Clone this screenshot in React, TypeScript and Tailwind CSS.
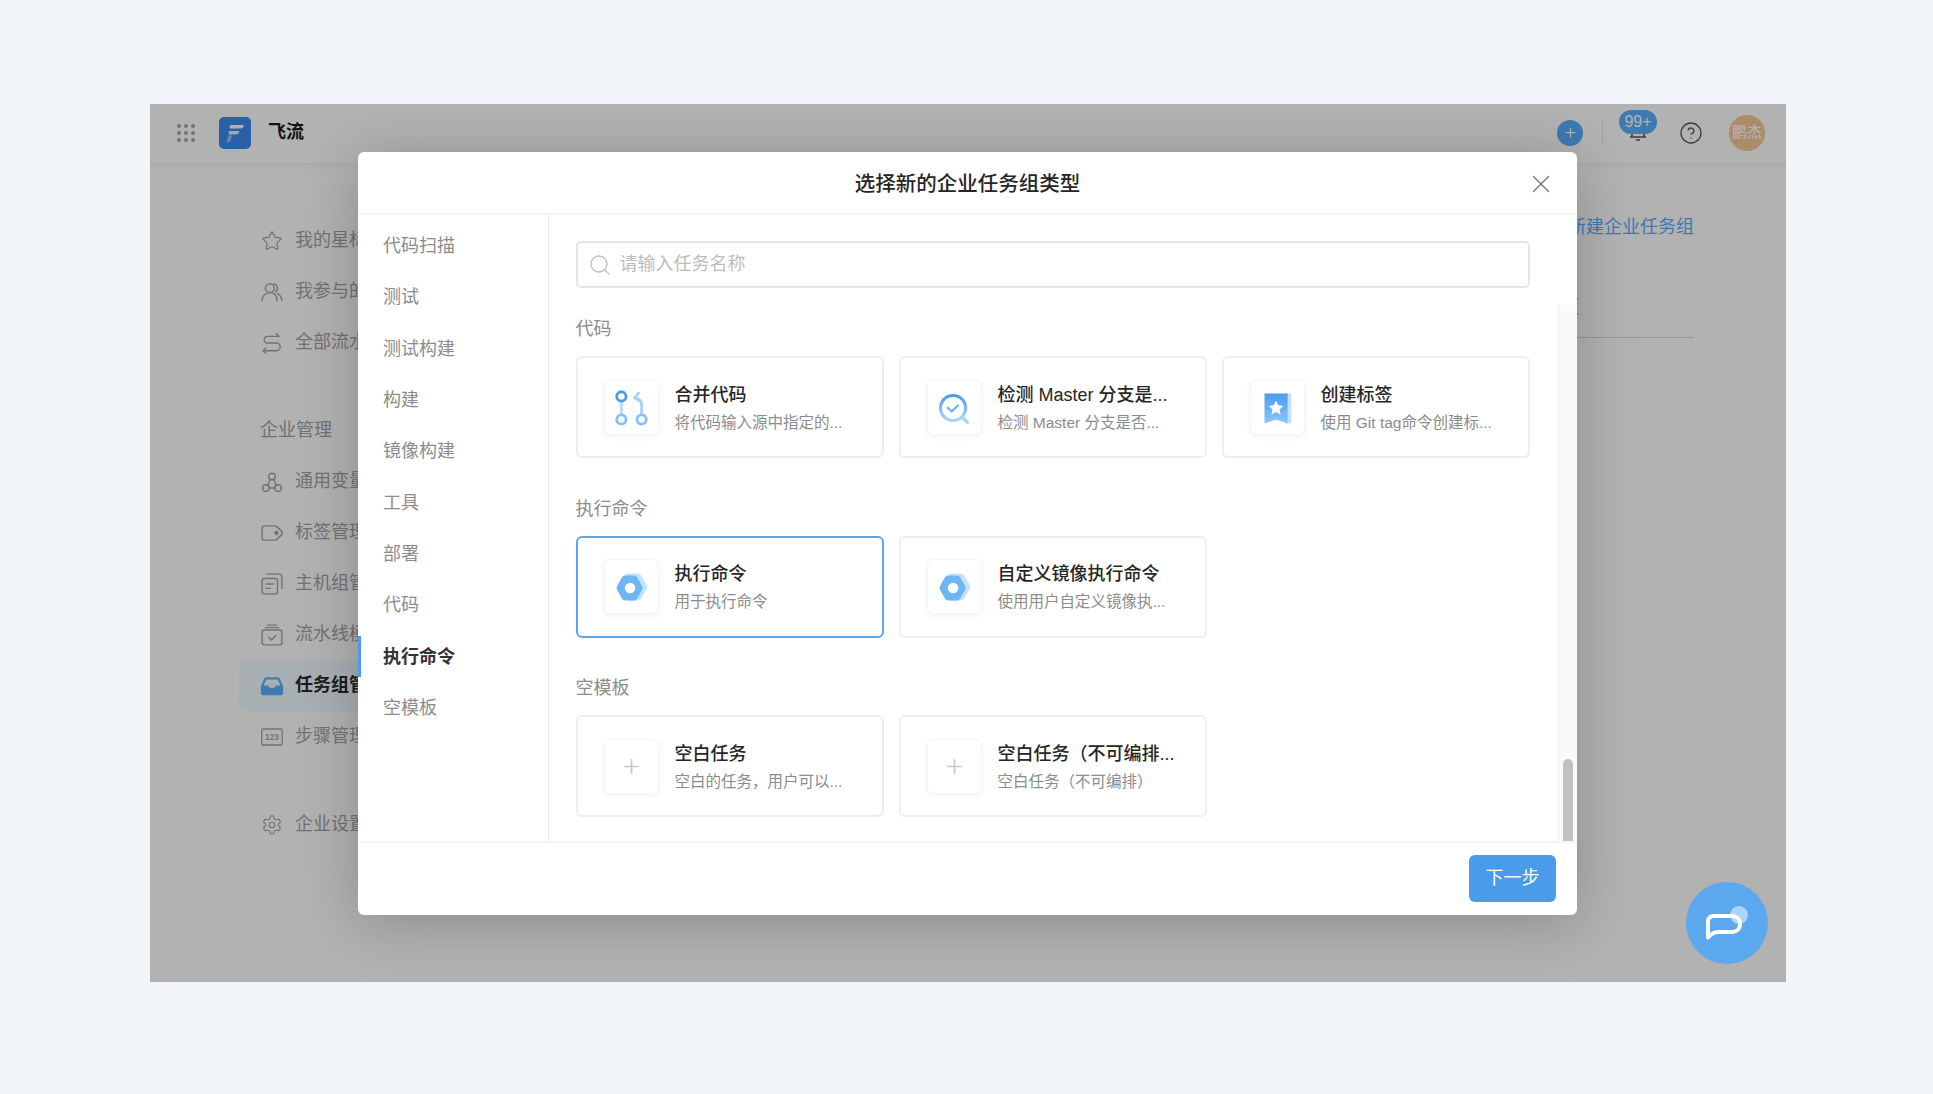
import { HelpCircle, Plus, Search, Settings, Star, X } from "lucide-react";
import type { ReactNode } from "react";

const font = "font-['Liberation_Sans','Noto_Sans_CJK_SC',sans-serif]";

function Line({ children }: { children: ReactNode }) {
  return (
    <svg width="22" height="22" viewBox="0 0 20 20" fill="none" stroke="currentColor" strokeWidth="1.300" strokeLinecap="round" strokeLinejoin="round">
      {children}
    </svg>
  );
}

const sideTop = [
  {
    label: "我的星标",
    icon: <Star size={22} strokeWidth={1.300} />,
  },
  {
    label: "我参与的",
    icon: (
      <Line>
        <circle cx="8" cy="6.500" r="4" />
        <path d="M1 18c0-4 2.500-6.500 5.500-7M9.500 10.800c3 .6 5 3.200 5 7.200M11.500 2.600a4 4 0 0 1 1.500 7.400M15 11.500c2.200 1 3.500 3 4 6" />
      </Line>
    ),
  },
  {
    label: "全部流水线",
    icon: (
      <Line>
        <path d="M14 1.500l2.500 2.500H6a3 3 0 0 0 0 6h8a3.500 3.500 0 0 1 0 7H2" />
        <path d="M4.500 14.500 2 17l2.500 2.500" />
      </Line>
    ),
  },
];

const sideManage = [
  {
    label: "通用变量",
    icon: (
      <Line>
        <circle cx="10" cy="5" r="3" />
        <circle cx="4.500" cy="15.500" r="3" />
        <circle cx="15.500" cy="15.500" r="3" />
        <path d="M8.500 7.700 6 13M11.500 7.700 14 13M7.500 15.500h5" />
      </Line>
    ),
  },
  {
    label: "标签管理",
    icon: (
      <Line>
        <path d="M3 3.500h10.500l5.500 5v3l-5.500 5H3a2 2 0 0 1-2-2v-9a2 2 0 0 1 2-2z" />
        <circle cx="14" cy="10" r="1.300" fill="currentColor" />
      </Line>
    ),
  },
  {
    label: "主机组管理",
    icon: (
      <Line>
        <rect x="1" y="5" width="14" height="14" rx="2" />
        <path d="M5 1h12a2 2 0 0 1 2 2v11M4.500 10h7M4.500 14h4" />
      </Line>
    ),
  },
  {
    label: "流水线模板",
    icon: (
      <Line>
        <rect x="1" y="5.500" width="18" height="13.500" rx="2" />
        <path d="M4 3.300h12M6 1h8M7 12l2.500 2.500L13.500 10.500" />
      </Line>
    ),
  },
  {
    label: "任务组管理",
    active: true,
    icon: (
      <svg width="22" height="22" viewBox="0 0 20 20" fill="#5aaeff">
        <path d="M5 2h10c1 0 1.600.5 2 1.300l3 6.700v6.500a2 2 0 0 1-2 2H2a2 2 0 0 1-2-2V10l3-6.700C3.400 2.500 4 2 5 2zm-.2 2L2.300 9.500h4.200c.5 1.500 1.800 2.500 3.500 2.500s3-1 3.500-2.500h4.200L15.200 4z" />
      </svg>
    ),
  },
  {
    label: "步骤管理",
    icon: (
      <svg width="22" height="22" viewBox="0 0 20 20" fill="none" stroke="currentColor" strokeWidth="1.200">
        <rect x="0.700" y="2.700" width="18.600" height="14.600" rx="1" />
        <text x="10" y="13" textAnchor="middle" fontSize="7.500" fill="currentColor" stroke="none" fontFamily="Liberation Sans" fontWeight="700">123</text>
      </svg>
    ),
  },
];

const navItems = ["代码扫描", "测试", "测试构建", "构建", "镜像构建", "工具", "部署", "代码", "执行命令", "空模板"];

function MergeIcon() {
  return (
    <svg width="53" height="53" viewBox="0 0 55 55" fill="none" strokeWidth="2.600">
      <path d="M17 21v14" stroke="#bcdcfa" strokeWidth="3" />
      <path d="M38 35V24c0-3-2-5-6-6.500" stroke="#a8d2f9" strokeWidth="3" strokeLinecap="round" />
      <path d="M35 12.500l-4.500 5 5.500 3" stroke="#a8d2f9" strokeWidth="3" strokeLinecap="round" strokeLinejoin="round" />
      <circle cx="17" cy="16" r="4.800" stroke="#4a9bea" strokeWidth="3" />
      <circle cx="17" cy="40" r="4.800" stroke="#85c1f7" strokeWidth="3" />
      <circle cx="38" cy="40" r="4.800" stroke="#85c1f7" strokeWidth="3" />
    </svg>
  );
}

function ScanIcon() {
  return (
    <svg width="53" height="53" viewBox="0 0 55 55" fill="none">
      <defs>
        <linearGradient id="scan" x1="0" y1="0" x2="0" y2="1">
          <stop offset="0" stopColor="#4a9bea" />
          <stop offset="1" stopColor="#aad6fb" />
        </linearGradient>
      </defs>
      <circle cx="26" cy="28" r="13" stroke="url(#scan)" strokeWidth="3.200" />
      <path d="M36 38l5 5" stroke="#a6d3fa" strokeWidth="3.200" strokeLinecap="round" />
      <path d="M20.500 28l4 3.500 6.500-6" stroke="#72b7f5" strokeWidth="2.400" strokeLinecap="round" strokeLinejoin="round" />
    </svg>
  );
}

function TagIcon() {
  return (
    <svg width="53" height="53" viewBox="0 0 55 55">
      <defs>
        <linearGradient id="mark" x1="0" y1="0" x2="0" y2="1">
          <stop offset="0" stopColor="#4a9bea" />
          <stop offset="1" stopColor="#8cc8fa" />
        </linearGradient>
      </defs>
      <path d="M36 13h6v31h-6z" fill="#c4e1fb" />
      <path d="M14 13h24v31l-12-4-12 4z" fill="url(#mark)" />
      <path d="M26 20.500l2.300 4.700 5.200.7-3.800 3.600.9 5.200-4.600-2.500-4.600 2.500.9-5.200-3.800-3.600 5.200-.7z" fill="#fff" />
    </svg>
  );
}

function NutIcon() {
  return (
    <svg width="53" height="53" viewBox="0 0 55 55">
      <path d="M24 18h10l6 10-6 10H24z" fill="#c6e2fc" stroke="#c6e2fc" strokeWidth="8" strokeLinejoin="round" />
      <path d="M21 20h9l5 9-5 9h-9l-5-9z" fill="#6cb5f6" stroke="#6cb5f6" strokeWidth="8" strokeLinejoin="round" />
      <circle cx="26" cy="29" r="5.500" fill="#fff" />
    </svg>
  );
}

function PlusIcon() {
  return (
    <svg width="53" height="53" viewBox="0 0 55 55" stroke="#c6c6c6" strokeWidth="1.800">
      <path d="M27.500 20v15M20 27.500h15" />
    </svg>
  );
}

const groups = [
  {
    title: "代码",
    cards: [
      { title: "合并代码", desc: "将代码输入源中指定的...", icon: <MergeIcon /> },
      { title: "检测 Master 分支是...", desc: "检测 Master 分支是否...", icon: <ScanIcon /> },
      { title: "创建标签", desc: "使用 Git tag命令创建标...", icon: <TagIcon /> },
    ],
  },
  {
    title: "执行命令",
    cards: [
      { title: "执行命令", desc: "用于执行命令", icon: <NutIcon />, selected: true },
      { title: "自定义镜像执行命令", desc: "使用用户自定义镜像执...", icon: <NutIcon /> },
    ],
  },
  {
    title: "空模板",
    cards: [
      { title: "空白任务", desc: "空白的任务，用户可以...", icon: <PlusIcon /> },
      { title: "空白任务（不可编排...", desc: "空白任务（不可编排）", icon: <PlusIcon /> },
    ],
  },
];

function SideRow({ label, icon, active }: { label: string; icon: ReactNode; active?: boolean }) {
  return (
    <div className={`flex h-[51px] items-center gap-[12px] rounded-lg pl-[22px] text-[18px] ${active ? "bg-[#f1fbff] font-bold text-[#2a2a2a]" : "text-[#a4a4a4]"}`}>
      <span className="flex h-[22px] w-[22px] items-center justify-center">{icon}</span>
      {label}
    </div>
  );
}

export default function App() {
  return (
    <div className={`${font} h-[1094px] w-[1933px] overflow-hidden bg-[#f2f6fa] pl-[150px] pt-[104px]`}>
      <div className="relative flex h-[878px] w-[1636px] flex-col overflow-hidden bg-white">
        <header className="flex h-[59px] shrink-0 items-center pb-[2px] pl-[27px] pr-[21px] shadow-[0_2px_8px_rgba(0,0,0,0.06)]">
          <div className="grid grid-cols-3 gap-[3px]">
            {Array.from({ length: 9 }).map((_, i) => (
              <span key={i} className="h-[4px] w-[4px] rounded-full bg-[#a8a8a8]" />
            ))}
          </div>
          <svg width="32" height="32" viewBox="0 0 32 32" className="ml-[24px]">
            <rect width="32" height="32" rx="5" fill="#3d8af0" />
            <path d="M11.500 8h13.500c-.6 2.400-1.800 3.500-3.500 3.500H11c-.6 0-.3-3.500.5-3.500z" fill="#fff" />
            <path d="M10 14h10.500c-.6 2.400-1.600 3.500-3.500 3.500H9.500z" fill="#e6eefb" />
            <path d="M9.500 18.500h3.500l-1.500 5.500-4 2z" fill="#9dbdf0" />
          </svg>
          <span className="ml-[17px] text-[18px] font-bold text-[#1c1c1c]">飞流</span>
          <div className="ml-auto flex items-center">
            <span className="flex h-[26px] w-[26px] items-center justify-center rounded-full bg-[#5aaeff] text-white">
              <Plus size={15} />
            </span>
            <span className="ml-[19px] h-[24px] w-px bg-[#e2e2e2]" />
            <span className="relative ml-[22px] flex h-[26px] w-[26px] items-center justify-center text-[#555]">
              <svg width="22" height="22" viewBox="0 0 22 22" fill="none" stroke="currentColor" strokeWidth="1.600">
                <path d="M5 15V9a6 6 0 0 1 12 0v6M3 15h16M9 18h4" />
              </svg>
              <span className="absolute -left-[6px] -top-[10px] flex h-[24px] w-[38px] items-center justify-center rounded-full bg-[#5aaeff] text-[16px] text-white">99+</span>
            </span>
            <span className="ml-[28px] text-[#555]">
              <HelpCircle size={24} strokeWidth={1.300} />
            </span>
            <span className="ml-[26px] flex h-[36px] w-[36px] items-center justify-center rounded-full bg-[#f6c898] text-[15px] font-medium text-white">鹏杰</span>
          </div>
        </header>

        <div className="flex flex-1">
          <aside className="ml-[89px] w-[210px] shrink-0 pt-[52px]">
            {sideTop.map((item) => (
              <SideRow key={item.label} {...item} />
            ))}
            <div className="mt-[37px] flex h-[51px] items-center pl-[21px] text-[18px] text-[#a4a4a4]">企业管理</div>
            {sideManage.map((item) => (
              <SideRow key={item.label} {...item} />
            ))}
            <div className="mt-[37px]">
              <SideRow label="企业设置" icon={<Settings size={22} strokeWidth={1.300} />} />
            </div>
          </aside>
          <main className="mr-[92px] min-w-0 flex-1 pt-[50px]">
            <div className="text-right text-[18px] leading-[28px] text-[#5aaeff]">新建企业任务组</div>
            <div className="flex h-[97px] items-end border-b border-[#d9d9d9] pb-[16px] pl-[1113px] text-[18px] leading-[27px] text-[#a4a4a4]">
              页
            </div>
          </main>
        </div>

        <div className="absolute inset-0 bg-black/30" />

        <div className="absolute left-[208px] top-[48px] flex h-[763px] w-[1219px] flex-col overflow-hidden rounded-[6px] bg-white shadow-[0_8px_60px_rgba(0,0,0,0.22)]">
          <div className="relative flex h-[63px] shrink-0 items-center justify-center border-b-2 border-[#f4f4f4] pt-[3px] text-[20.500px] font-medium text-[#262626]">
            选择新的企业任务组类型
            <X size={30} strokeWidth={1} className="absolute right-[21px] top-[17px] text-[#6f6f6f]" />
          </div>
          <div className="relative flex min-h-0 flex-1">
            <nav className="w-[191px] shrink-0 border-r border-[#e8e8e8] pt-[6px]">
              {navItems.map((item) => (
                <div key={item} className={`relative flex h-[51.300px] items-center pl-[25px] text-[18px] ${item === "执行命令" ? "font-bold text-[#333]" : "text-[#8c8c8c]"}`}>
                  {item === "执行命令" && <span className="absolute left-0 top-[5px] h-[41px] w-[3px] bg-[#4a9bea]" />}
                  {item}
                </div>
              ))}
            </nav>
            <div className="flex-1 pl-[26.500px] pt-[26px]">
              <div className="flex h-[47px] w-[954px] items-center gap-[8px] rounded-[5px] border-2 border-[#e6e6e6] pl-[10px]">
                <Search size={24} strokeWidth={1.300} className="text-[#bdbdbd]" />
                <input placeholder="请输入任务名称" className="flex-1 bg-transparent text-[18px] outline-none placeholder:text-[#bcbcbc]" />
              </div>
              {groups.map((group, i) => (
                <section key={group.title} className={i === 0 ? "mt-[29px]" : "mt-[38.500px]"}>
                  <h3 className="mb-[15px] text-[18px] leading-[24px] font-normal text-[#8c8c8c]">{group.title}</h3>
                  <div className="grid w-[954px] grid-cols-3 gap-x-[15px]">
                    {group.cards.map((card) => (
                      <div key={card.title} className={`flex h-[102px] items-center gap-[16px] rounded-[6px] border-2 pl-[26px] ${card.selected ? "border-[#5ba5ee]" : "border-[#eeeeee]"}`}>
                        <div className="flex h-[55px] w-[55px] shrink-0 items-center justify-center rounded-[6px] border border-[#f5f5f5] bg-white shadow-[0_2px_6px_rgba(0,0,0,0.05)]">
                          {card.icon}
                        </div>
                        <div className="min-w-0 pt-[2px]">
                          <div className="whitespace-nowrap text-[18px] leading-[26px] font-medium text-[#262626]">{card.title}</div>
                          <div className="mt-[3px] whitespace-nowrap text-[15.500px] leading-[24px] text-[#8c8c8c]">{card.desc}</div>
                        </div>
                      </div>
                    ))}
                  </div>
                </section>
              ))}
            </div>
            <div className="absolute bottom-0 right-0 top-[90px] w-[19px] border-l border-[#f0f0f0] bg-[#fafafa]">
              <div className="absolute bottom-0 left-[4px] h-[82px] w-[10px] rounded-t-[5px] bg-[#c1c1c1]" />
            </div>
          </div>
          <div className="flex h-[74px] shrink-0 items-center justify-end border-t-2 border-[#f4f4f4] pb-[2px] pr-[21px]">
            <button className="h-[47px] w-[87px] rounded-[6px] bg-[#4a9bea] text-[18px] text-white">下一步</button>
          </div>
        </div>

        <div className="absolute left-[1536px] top-[778px] flex h-[82px] w-[82px] items-center justify-center rounded-full bg-[#5ca8ee]">
          <svg width="52" height="44" viewBox="0 0 52 44" fill="none">
            <path d="M7 36.500V21c0-4 2-6 6-6h18c5 0 8 3 8 8s-3 8-8 8H17c-4 0-7 2-10 5.500z" stroke="#fff" strokeWidth="4" strokeLinejoin="round" />
            <circle cx="38" cy="14" r="9" fill="#fff" fillOpacity="0.5" />
          </svg>
        </div>
      </div>
    </div>
  );
}
